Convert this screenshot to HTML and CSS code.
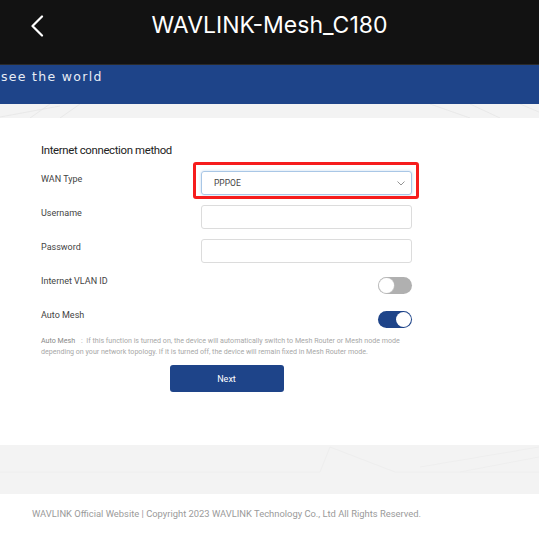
FILE: index.html
```html
<!DOCTYPE html>
<html lang="en">
<head>
<meta charset="utf-8">
<title>WAVLINK-Mesh_C180</title>
<link rel="stylesheet" href="styles.css">
</head>
<body>
<header class="topbar">
  <button class="back" aria-label="Back">
    <svg width="14" height="22" viewBox="0 0 14 22"><path d="M12 1.5 L2.5 11 L12 20.5" fill="none" stroke="#fff" stroke-width="2.2" stroke-linecap="round" stroke-linejoin="round"/></svg>
  </button>
  <h1 class="title">WAVLINK-Mesh_C180</h1>
</header>
<div class="banner"><span class="slogan">see the world</span></div>
<div class="strip strip-top">
  <svg class="lines" width="539" height="14" viewBox="0 0 539 14" preserveAspectRatio="none"><path d="M0 13 L60 2 M30 14 L50 0 M60 14 L80 0 M430 0 L470 14 M470 0 L500 14 M520 0 L539 8" stroke="#e6e6e6" stroke-width="0.8" fill="none"/></svg>
</div>
<main class="card">
  <h2 class="section-title">Internet connection method</h2>
  <div class="form">
    <label class="label">WAN Type</label>
    <div class="control">
      <div class="select">
        <span>PPPOE</span>
        <svg width="8" height="5" viewBox="0 0 8 5"><path d="M0.5 0.5 L4 4 L7.5 0.5" fill="none" stroke="#888" stroke-width="0.9"/></svg>
      </div>
      <span class="highlight"></span>
    </div>
    <label class="label">Username</label>
    <div class="control"><input class="input" type="text"></div>
    <label class="label">Password</label>
    <div class="control"><input class="input" type="password"></div>
    <label class="label">Internet VLAN ID</label>
    <div class="control toggle-cell"><span class="toggle off"><span class="knob"></span></span></div>
    <label class="label">Auto Mesh</label>
    <div class="control toggle-cell"><span class="toggle on"><span class="knob"></span></span></div>
  </div>
  <p class="note"><b class="note-key">Auto Mesh</b>:&nbsp; If this function is turned on, the device will automatically switch to Mesh Router or Mesh node mode depending on your network topology. If it is turned off, the device will remain fixed in Mesh Router mode.</p>
  <div class="actions"><button class="next">Next</button></div>
</main>
<div class="strip strip-bottom">
  <svg class="lines" width="539" height="49" viewBox="0 0 539 49" preserveAspectRatio="none"><path d="M0 27 L320 27 L330 2 M330 2 L395 27 L540 27 M420 22 L539 2 M460 27 L539 12" stroke="#eeeeee" stroke-width="1" fill="none"/></svg>
</div>
<footer class="footer">WAVLINK Official Website | Copyright 2023 WAVLINK Technology Co., Ltd All Rights Reserved.</footer>
</body>
</html>
```
FILE: styles.css
```css
* { box-sizing: border-box; }
html, body { margin: 0; padding: 0; }
body {
  width: 539px;
  height: 542px;
  overflow: hidden;
  background: #fff;
  font-family: Roboto, "Liberation Sans", Arial, sans-serif;
  color: #333;
}
.topbar {
  height: 65px;
  background: #121212;
  display: flex;
  align-items: center;
  border-bottom: 1px solid #2a2a2a;
}
.back {
  background: none;
  border: 0;
  padding: 0;
  margin: -12px 0 0 30px;
  width: 14px;
  height: 22px;
  display: flex;
}
.title {
  margin: -14px 0 0 0;
  flex: 1;
  text-align: center;
  padding-right: 44px;
  font-family: Inter, "Noto Sans", sans-serif;
  font-weight: 400;
  font-size: 23px;
  color: #fff;
}
.banner {
  height: 39px;
  background: #1e4489;
  padding-top: 4px;
  overflow: hidden;
}
.slogan {
  display: block;
  padding-left: 1px;
  font-family: "DejaVu Sans", sans-serif;
  font-size: 12.5px;
  letter-spacing: 1.3px;
  color: #e8edf5;
  line-height: 16px;
  white-space: nowrap;
}
.strip {
  background: #f3f3f3;
  overflow: hidden;
}
.strip .lines { display: block; }
.strip-top { height: 14px; }
.strip-bottom { height: 49px; }
.card {
  height: 327px;
  background: #fff;
  padding: 25px 127px 0 41px;
}
.section-title {
  margin: 0 0 14px 0;
  font-size: 11.4px;
  letter-spacing: -0.35px;
  line-height: 14px;
  font-weight: 400;
  color: #222;
}
.form {
  display: grid;
  grid-template-columns: 160px 211px;
  grid-auto-rows: 24px;
  row-gap: 10px;
}
.label {
  font-size: 9px;
  line-height: 12px;
  padding-top: 2px;
  color: #444;
}
.control { position: relative; }
.select {
  height: 24px;
  border: 1px solid #a9c7e6;
  border-radius: 3px;
  box-shadow: 0 0 3px rgba(120, 170, 220, 0.45);
  display: flex;
  align-items: center;
  justify-content: space-between;
  padding: 0 6px 0 12px;
  font-size: 8.5px;
  color: #444;
}
.highlight {
  position: absolute;
  left: -8px;
  right: -7px;
  top: -9px;
  bottom: -4px;
  border: 3px solid #f61d1d;
  border-radius: 3px;
  pointer-events: none;
}
.input {
  display: block;
  width: 100%;
  height: 24px;
  border: 1px solid #dcdcdc;
  border-radius: 3px;
  background: #fff;
  padding: 0 8px;
  font-size: 9px;
}
.toggle-cell {
  display: flex;
  align-items: center;
  justify-content: flex-end;
}
.toggle {
  width: 34px;
  height: 17px;
  border-radius: 9px;
  display: flex;
  align-items: center;
  padding: 0 1px;
}
.toggle .knob {
  width: 15px;
  height: 15px;
  border-radius: 50%;
  background: #fff;
}
.toggle.off { background: #b0b0b0; justify-content: flex-start; }
.toggle.off .knob { box-shadow: 0 0 0 0.6px #c8c8c8; }
.toggle.on { background: #1e4489; justify-content: flex-end; }
.note {
  margin: 4px 0 0 0;
  width: 380px;
  font-size: 7.1px;
  line-height: 11px;
  color: #a8a8a8;
}
.note-key {
  font-weight: 400;
  color: #888;
  margin-right: 6px;
}
.actions {
  display: flex;
  justify-content: center;
  margin-top: 8px;
}
.next {
  width: 114px;
  height: 27px;
  border: 0;
  border-radius: 3px;
  background: #1e4489;
  color: #fff;
  font-family: Roboto, "Liberation Sans", sans-serif;
  font-size: 9px;
}
.footer {
  height: 48px;
  padding: 14px 0 0 32px;
  font-size: 9.4px;
  line-height: 12px;
  color: #9a9a9a;
  white-space: nowrap;
}
```
